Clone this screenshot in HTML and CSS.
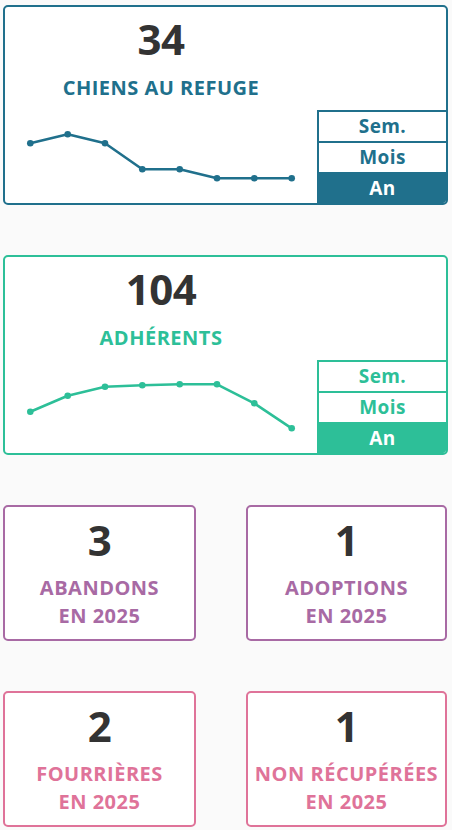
FILE: index.html
```html
<!DOCTYPE html>
<html lang="fr">
<head>
<meta charset="utf-8">
<link rel="stylesheet" href="styles.css">
</head>
<body>
<div class="page">
  <section class="card big teal">
    <div class="main">
      <div class="num">34</div>
      <div class="label">CHIENS AU REFUGE</div>
      <svg class="spark" viewBox="0 0 312 80" width="312" height="80">
        <polyline points="25.3,23.3 62.7,14.3 100,23.3 137.3,49.3 174.7,49.3 212,58.3 249.3,58.3 286.7,58.3"/>
        <circle cx="25.3" cy="23.3" r="3.3"/><circle cx="62.7" cy="14.3" r="3.3"/><circle cx="100" cy="23.3" r="3.3"/><circle cx="137.3" cy="49.3" r="3.3"/><circle cx="174.7" cy="49.3" r="3.3"/><circle cx="212" cy="58.3" r="3.3"/><circle cx="249.3" cy="58.3" r="3.3"/><circle cx="286.7" cy="58.3" r="3.3"/>
      </svg>
    </div>
    <div class="periods">
      <div class="btn">Sem.</div>
      <div class="btn">Mois</div>
      <div class="btn active">An</div>
    </div>
  </section>

  <section class="card big green">
    <div class="main">
      <div class="num">104</div>
      <div class="label">ADHÉRENTS</div>
      <svg class="spark" viewBox="0 0 312 80" width="312" height="80">
        <polyline points="25.3,41.7 62.7,25.7 100,16.7 137.3,15.3 174.7,14.3 212,14.3 249.3,33.3 286.7,58.3"/>
        <circle cx="25.3" cy="41.7" r="3.3"/><circle cx="62.7" cy="25.7" r="3.3"/><circle cx="100" cy="16.7" r="3.3"/><circle cx="137.3" cy="15.3" r="3.3"/><circle cx="174.7" cy="14.3" r="3.3"/><circle cx="212" cy="14.3" r="3.3"/><circle cx="249.3" cy="33.3" r="3.3"/><circle cx="286.7" cy="58.3" r="3.3"/>
      </svg>
    </div>
    <div class="periods">
      <div class="btn">Sem.</div>
      <div class="btn">Mois</div>
      <div class="btn active">An</div>
    </div>
  </section>

  <div class="row">
    <section class="card small purple">
      <div class="num">3</div>
      <div class="label">ABANDONS<br>EN 2025</div>
    </section>
    <section class="card small purple">
      <div class="num">1</div>
      <div class="label">ADOPTIONS<br>EN 2025</div>
    </section>
  </div>

  <div class="row">
    <section class="card small pink">
      <div class="num">2</div>
      <div class="label">FOURRIÈRES<br>EN 2025</div>
    </section>
    <section class="card small pink">
      <div class="num">1</div>
      <div class="label">NON RÉCUPÉRÉES<br>EN 2025</div>
    </section>
  </div>
</div>
</body>
</html>
```

FILE: styles.css
```css
html, body {
  margin: 0;
  padding: 0;
  background: #fafafa;
}

body {
  font-family: "Open Sans", "Liberation Sans", sans-serif;
  font-weight: 700;
  color: #333333;
}

.page {
  width: 445px;
  padding: 5px 0 0 3px;
  display: flex;
  flex-direction: column;
  gap: 50px;
}

.card {
  box-sizing: border-box;
  background: #ffffff;
  border: 2px solid var(--c);
  border-radius: 5px;
  overflow: hidden;
}

.teal { --c: #20708c; }
.green { --c: #2dbf98; }
.purple { --c: #a86aa4; }
.pink { --c: #df7399; }

.big {
  height: 200px;
  display: grid;
  grid-template-columns: 312px 1fr;
}

.main {
  display: flex;
  flex-direction: column;
  align-items: center;
}

.num {
  font-size: 42px;
  line-height: 48px;
  letter-spacing: -0.5px;
  color: #333333;
}

.big .num {
  margin-top: 8px;
}

.label {
  color: var(--c);
  font-size: 20px;
  letter-spacing: 0.5px;
}

.big .label {
  margin-top: 11px;
  line-height: 28px;
}

.spark {
  display: block;
  margin-top: auto;
  margin-bottom: 3px;
}

.spark polyline {
  fill: none;
  stroke: var(--c);
  stroke-width: 2.6;
  stroke-linejoin: round;
}

.spark circle {
  fill: var(--c);
}

.periods {
  align-self: end;
  display: flex;
  flex-direction: column;
}

.btn {
  box-sizing: border-box;
  height: 31px;
  border-left: 2px solid var(--c);
  border-top: 2px solid var(--c);
  color: var(--c);
  font-size: 19px;
  letter-spacing: 0.4px;
  line-height: 28px;
  text-align: center;
}

.btn.active {
  background: var(--c);
  color: #ffffff;
}

.row {
  display: grid;
  grid-template-columns: 193px 201px;
  column-gap: 50px;
}

.small {
  height: 136px;
  display: flex;
  flex-direction: column;
  align-items: center;
}

.small .num {
  margin-top: 9px;
}

.small .label {
  margin-top: 10px;
  line-height: 28px;
  text-align: center;
}
```
